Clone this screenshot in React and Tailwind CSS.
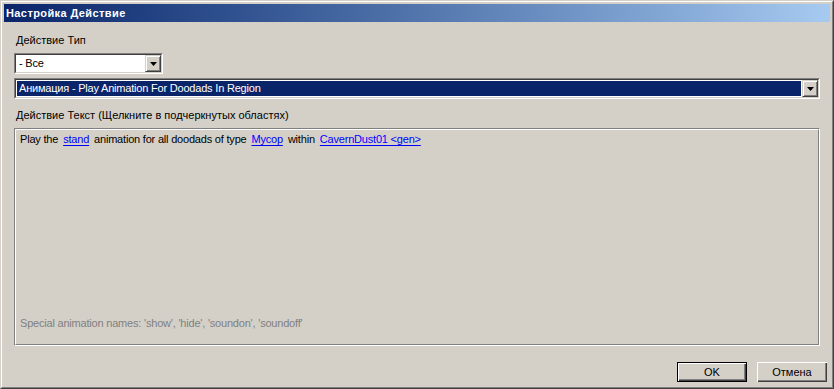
import React from "react";

// Classic Win2000 dialog: "Настройка Действие"

function DropArrow() {
  return (
    <svg width="7" height="4" viewBox="0 0 7 4" aria-hidden="true">
      <path d="M0 0h7L3.5 4z" fill="#000" />
    </svg>
  );
}

function ComboButton() {
  return (
    <span className="flex h-full w-[16px] items-center justify-center border border-t-[#d4d0c8] border-l-[#d4d0c8] border-r-[#404040] border-b-[#404040] bg-[#d4d0c8] shadow-[inset_1px_1px_0_#fff,inset_-1px_-1px_0_#808080]">
      <DropArrow />
    </span>
  );
}

function Combo({ value, width, selected }) {
  return (
    <div
      className={[
        "flex h-[21px] border border-t-[#808080] border-l-[#808080] border-r-white border-b-white",
        width,
      ].join(" ")}
    >
      <div className="flex flex-1 border border-t-[#404040] border-l-[#404040] border-r-[#d4d0c8] border-b-[#d4d0c8] bg-white">
        <div
          className={[
            "flex flex-1 items-center pl-[2px] m-[1px] tracking-[-0.2px]",
            selected ? "bg-[#0a246a] text-white" : "text-black",
          ].join(" ")}
        >
          {value}
        </div>
        <ComboButton />
      </div>
    </div>
  );
}

function Link({ children }) {
  return <span className="text-[#0000ff] underline underline-offset-2 mx-[5px]">{children}</span>;
}

function Button({ children, isDefault }) {
  return (
    <button
      className={[
        "h-[20px] w-[70px] bg-[#d4d0c8] text-black",
        isDefault
          ? "border border-black shadow-[inset_1px_1px_0_#fff,inset_-1px_-1px_0_#404040,inset_-2px_-2px_0_#808080]"
          : "shadow-[inset_1px_1px_0_#fff,inset_-1px_-1px_0_#404040,inset_-2px_-2px_0_#808080]",
      ].join(" ")}
    >
      {children}
    </button>
  );
}

export default function App() {
  return (
    <div
      className="w-[834px] h-[389px] bg-[#d4d0c8] border border-t-[#d4d0c8] border-l-[#d4d0c8] border-r-[#404040] border-b-[#404040] text-[11px] leading-[13px] text-black"
      style={{ fontFamily: '"Liberation Sans", Arial, sans-serif' }}
    >
      <div className="h-full border border-t-white border-l-white border-r-[#808080] border-b-[#808080] p-[2px] flex flex-col">
        {/* Title bar */}
        <div className="h-[18px] flex items-center pl-[2px] bg-gradient-to-r from-[#0a246a] to-[#a6caf0] text-white font-bold tracking-[0.4px]">
          Настройка Действие
        </div>

        <div className="flex flex-col pl-[10px] pr-[10px]">
          <div className="mt-[12px] pl-[2px]">Действие Тип</div>

          <div className="mt-[6px]">
            <Combo value="- Все" width="w-[149px]" />
          </div>

          <div className="mt-[4px]">
            <Combo value="Анимация - Play Animation For Doodads In Region" width="w-[806px]" selected />
          </div>

          <div className="mt-[10px] pl-[2px]">Действие Текст (Щелкните в подчеркнутых областях)</div>

          {/* Etched text area */}
          <div className="mt-[6px] w-[806px] h-[218px] border border-t-[#808080] border-l-[#808080] border-r-white border-b-white">
            <div className="h-full flex flex-col justify-between border border-t-white border-l-white border-r-[#808080] border-b-[#808080] pt-[3px] pb-[14px] pl-[4px] tracking-[-0.2px]">
              <div>
                Play the<Link>stand</Link>animation for all doodads of type<Link>Mycop</Link>within
                <Link>CavernDust01 &lt;gen&gt;</Link>
              </div>
              <div className="text-[#808080]">
                Special animation names: 'show', 'hide', 'soundon', 'soundoff'
              </div>
            </div>
          </div>
        </div>

        <div className="mt-auto mb-[3px] mr-[3px] flex justify-end gap-[10px]">
          <Button isDefault>OK</Button>
          <Button>Отмена</Button>
        </div>
      </div>
    </div>
  );
}
